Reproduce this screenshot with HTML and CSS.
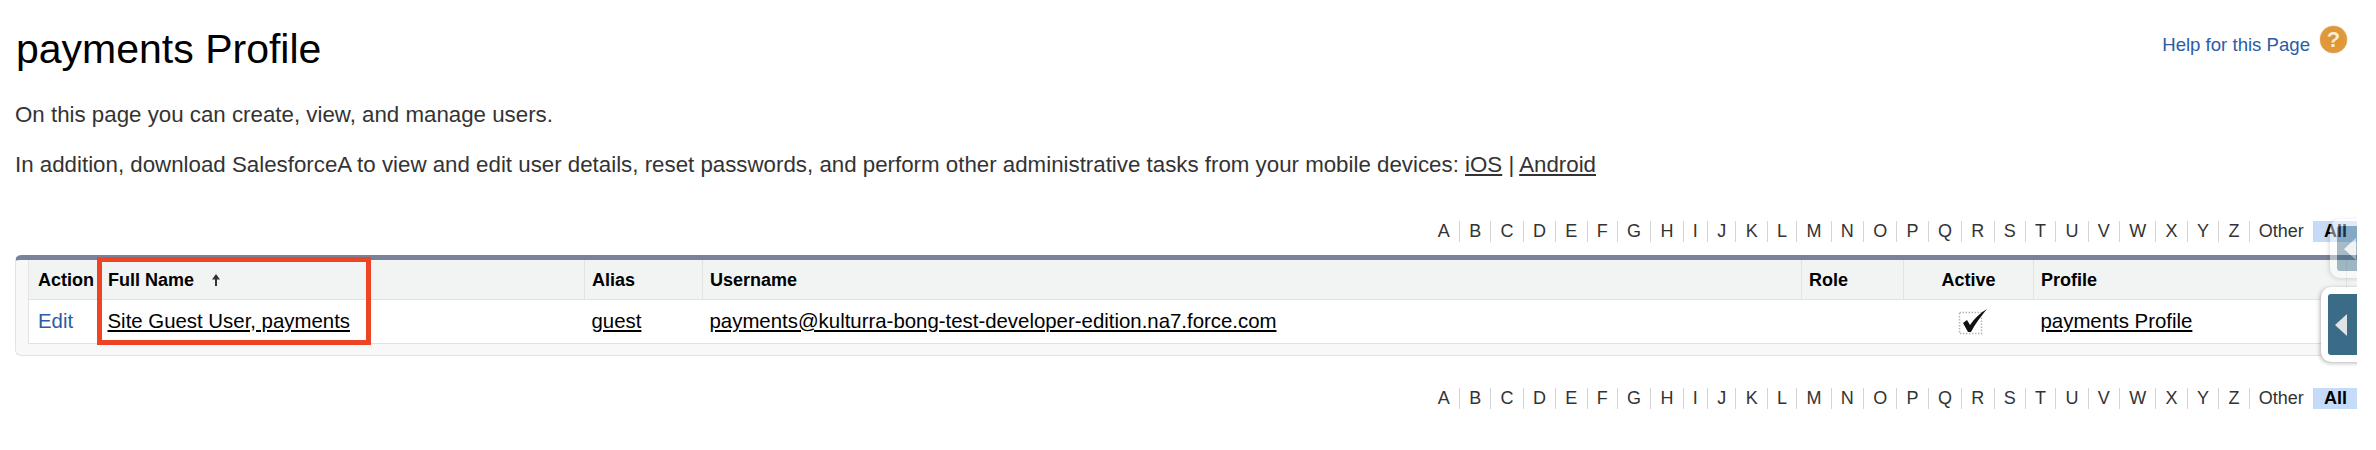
FILE: index.html
```html
<!DOCTYPE html>
<html lang="en">
<head>
  <meta charset="UTF-8">
  <title>payments Profile</title>
  <link rel="stylesheet" href="styles.css">
</head>
<body>
  <div class="page">
    <div class="page-head">
      <h1 class="page-title">payments Profile</h1>
      <div class="help">
        <a href="#" class="help-link">Help for this Page</a>
        <span class="help-icon">?</span>
      </div>
    </div>

    <p class="intro">On this page you can create, view, and manage users.</p>
    <p class="intro">In addition, download SalesforceA to view and edit user details, reset passwords, and perform other administrative tasks from your mobile devices: <a href="#">iOS</a> | <a href="#">Android</a></p>

    <div class="rolodex">
      <a href="#">A</a><a href="#">B</a><a href="#">C</a><a href="#">D</a><a href="#">E</a><a href="#">F</a><a href="#">G</a><a href="#">H</a><a href="#">I</a><a href="#">J</a><a href="#">K</a><a href="#">L</a><a href="#">M</a><a href="#">N</a><a href="#">O</a><a href="#">P</a><a href="#">Q</a><a href="#">R</a><a href="#">S</a><a href="#">T</a><a href="#">U</a><a href="#">V</a><a href="#">W</a><a href="#">X</a><a href="#">Y</a><a href="#">Z</a><a href="#">Other</a><a href="#" class="current">All</a>
    </div>

    <div class="list-panel">
      <table class="list">
        <colgroup>
          <col class="col-action"><col class="col-name"><col class="col-alias"><col class="col-user">
          <col class="col-role"><col class="col-active"><col class="col-profile"><col class="col-rest">
        </colgroup>
        <tr>
          <th>Action</th>
          <th>Full Name
            <svg class="sort-arrow" width="10" height="14" viewBox="0 0 10 14"><path d="M5 1 L9 6.500 H6 V13 H4 V6.500 H1 Z" fill="#333"/></svg>
          </th>
          <th>Alias</th>
          <th>Username</th>
          <th>Role</th>
          <th class="center">Active</th>
          <th>Profile</th>
          <th></th>
        </tr>
        <tr>
          <td><a href="#" class="edit">Edit</a></td>
          <td><a href="#">Site Guest User, payments</a></td>
          <td><a href="#">guest</a></td>
          <td><a href="#">payments@kulturra-bong-test-developer-edition.na7.force.com</a></td>
          <td></td>
          <td class="center">
            <svg class="check" width="30" height="28" viewBox="0 0 30 28">
              <rect x="1.500" y="5.500" width="22" height="21" fill="none" stroke="#b5b5b5" stroke-width="1.500" stroke-dasharray="1.500 1.500"/>
              <path d="M5 16 L9 13 L12 18 C16 12 22 6 29 2 C23 9 17 17 13 25 L10 25 Z" fill="#111"/>
            </svg>
          </td>
          <td><a href="#">payments Profile</a></td>
          <td></td>
        </tr>
      </table>
      <div class="highlight-box"></div>
    </div>

    <div class="rolodex rolodex-bottom">
      <a href="#">A</a><a href="#">B</a><a href="#">C</a><a href="#">D</a><a href="#">E</a><a href="#">F</a><a href="#">G</a><a href="#">H</a><a href="#">I</a><a href="#">J</a><a href="#">K</a><a href="#">L</a><a href="#">M</a><a href="#">N</a><a href="#">O</a><a href="#">P</a><a href="#">Q</a><a href="#">R</a><a href="#">S</a><a href="#">T</a><a href="#">U</a><a href="#">V</a><a href="#">W</a><a href="#">X</a><a href="#">Y</a><a href="#">Z</a><a href="#">Other</a><a href="#" class="current">All</a>
    </div>

    <!-- side handles sit over the page -->
    <div class="side-handle handle-faded"><div class="handle-inner"><span class="handle-arrow"></span></div></div>
    <div class="side-handle handle-main"><div class="handle-inner"><span class="handle-arrow"></span></div></div>
  </div>
</body>
</html>
```

FILE: styles.css
```css
* {
  box-sizing: border-box;
}

body {
  margin: 0;
  background: white;
  font-family: "Liberation Sans", Arial, sans-serif;
  color: #333;
}

a {
  color: #000;
}

.page {
  position: relative;
  width: 2357px;
  height: 450px;
  overflow: hidden;
}

.page-head {
  display: flex;
  justify-content: space-between;
  padding: 26px 10px 0 16px;
  height: 102px;
}

.page-title {
  margin: 0;
  font-size: 41px;
  font-weight: normal;
  line-height: 46px;
  color: #000;
}

.help {
  display: flex;
  align-items: flex-start;
  gap: 10px;
}

.help-link {
  font-size: 18.600px;
  line-height: 28px;
  color: #2a5ca8;
  text-decoration: none;
  margin-top: 5px;
}

.help-icon {
  width: 27px;
  height: 27px;
  border-radius: 50%;
  background: radial-gradient(circle at 50% 45%, #dd9434, #e0993c 70%, #d08a30);
  color: #fdeccf;
  font-size: 22px;
  font-weight: bold;
  line-height: 27px;
  text-align: center;
  box-shadow: 0 0 1px #a86a20;
}

.intro {
  margin: 0 0 25px 15px;
  font-size: 22.300px;
  line-height: 25px;
  color: #333;
}

.intro a {
  color: #333;
}

.rolodex {
  display: flex;
  justify-content: flex-end;
  margin-top: 44px;
  height: 21px;
  font-size: 18px;
  line-height: 21px;
}

.rolodex-bottom {
  margin-top: 32px;
}

.rolodex a {
  padding: 0 9.200px;
  border-right: 1px solid #d4d4d4;
  color: #333;
  text-decoration: none;
}

.rolodex a.current {
  padding: 0 10px;
  border-right: none;
  background: #c5dbf7;
  color: #000;
  font-weight: bold;
}

.list-panel {
  position: relative;
  width: 2380px;
  margin: 13px 0 0 15px;
  padding: 0 0 12px 12px;
  height: 101px;
  background: #f8f8f8;
  border-top: 5px solid #7a8299;
  border-bottom: 1px solid #e0e3e5;
  border-left: 1px solid #e0e3e5;
  border-radius: 6px 0 0 6px;
}

.list {
  width: 2360px;
  table-layout: fixed;
  border-collapse: collapse;
  background: white;
  border-left: 1px solid #e0e3e5;
  border-bottom: 1px solid #e0e3e5;
}

.col-action { width: 72px; }
.col-name { width: 484px; }
.col-alias { width: 118px; }
.col-user { width: 1099px; }
.col-role { width: 102px; }
.col-active { width: 130px; }
.col-profile { width: 313px; }

.list th {
  height: 39px;
  padding: 2px 7px 0;
  background: #f2f3f3;
  border-right: 1px solid #e0e3e5;
  border-bottom: 1px solid #e0e3e5;
  font-size: 18px;
  text-align: left;
  color: #000;
  white-space: nowrap;
}

.list th:first-child,
.list td:first-child {
  padding-left: 9px;
  padding-right: 0;
}

.list td {
  height: 44px;
  padding: 0 7px;
  font-size: 20.400px;
  white-space: nowrap;
}

.list .center {
  text-align: center;
}

.list a.edit {
  color: #2a5ca8;
  text-decoration: none;
}

.sort-arrow {
  margin-left: 12px;
  vertical-align: -1px;
}

.check {
  display: block;
  margin: 0 auto;
  transform: translateX(4px);
}

/* annotation drawn on the screenshot */
.highlight-box {
  position: absolute;
  left: 81px;
  top: -3px;
  width: 274px;
  height: 88px;
  border: 5px solid #ee4426;
}

.side-handle {
  position: absolute;
  background: white;
  border-radius: 10px 0 0 10px;
  box-shadow: -1px 1px 4px rgba(0, 0, 0, 0.3);
  padding: 7px 0 7px 7px;
}

.handle-inner {
  display: flex;
  align-items: center;
  height: 100%;
  background: #3a6b87;
  border-radius: 3px 0 0 3px;
  padding-left: 7px;
}

.handle-arrow {
  width: 0;
  height: 0;
  border-top: 11px solid transparent;
  border-bottom: 11px solid transparent;
  border-right: 12px solid #dfe3e5;
}

.handle-main {
  left: 2321px;
  top: 287px;
  width: 50px;
  height: 75px;
}

.handle-faded {
  left: 2330px;
  top: 219px;
  width: 50px;
  height: 59px;
  opacity: 0.45;
}
```
